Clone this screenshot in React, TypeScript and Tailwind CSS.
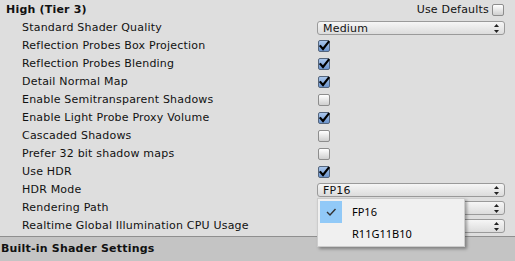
import React from "react";

const Arrows = () => (
  <svg width="5" height="9" viewBox="0 0 5 9" className="mr-[5px]">
    <path d="M2.5 0 L5 3 L0 3 Z" fill="#222" />
    <path d="M0 6 L5 6 L2.5 9 Z" fill="#222" />
  </svg>
);

const Check = ({ on }: { on: boolean }) =>
  on ? (
    <div className="w-[12px] h-[12px] rounded-[2px] border border-[#54657c] bg-gradient-to-b from-[#a9c6ec] to-[#6c94cc] relative">
      <svg width="12" height="12" viewBox="0 0 12 12" className="absolute left-[-1px] top-[-1px]">
        <path d="M2.5 6.2 L5 9 L10.5 2" stroke="#000" strokeWidth="2.2" fill="none" strokeLinecap="square" />
      </svg>
    </div>
  ) : (
    <div className="w-[12px] h-[12px] rounded-[2px] border border-[#8d8d8d] bg-gradient-to-b from-[#ffffff] to-[#cfcfcf]" />
  );

const Drop = ({ text }: { text: string }) => (
  <div className="w-[188px] h-[14px] rounded-[3px] border border-[#9a9a9a] bg-gradient-to-b from-[#f6f6f6] to-[#dcdcdc] flex items-center justify-between">
    <span className="pl-[5px] leading-none">{text}</span>
    <Arrows />
  </div>
);

type Row = { label: string; kind: "drop" | "check"; value?: string; on?: boolean };

const rows: Row[] = [
  { label: "Standard Shader Quality", kind: "drop", value: "Medium" },
  { label: "Reflection Probes Box Projection", kind: "check", on: true },
  { label: "Reflection Probes Blending", kind: "check", on: true },
  { label: "Detail Normal Map", kind: "check", on: true },
  { label: "Enable Semitransparent Shadows", kind: "check", on: false },
  { label: "Enable Light Probe Proxy Volume", kind: "check", on: true },
  { label: "Cascaded Shadows", kind: "check", on: false },
  { label: "Prefer 32 bit shadow maps", kind: "check", on: false },
  { label: "Use HDR", kind: "check", on: true },
  { label: "HDR Mode", kind: "drop", value: "FP16" },
  { label: "Rendering Path", kind: "drop", value: "" },
  { label: "Realtime Global Illumination CPU Usage", kind: "drop", value: "" },
];

export default function App() {
  return (
    <div
      className="w-[515px] h-[261px] bg-[#dedede] text-[11px] tracking-[0.2px] text-[#111] relative overflow-hidden flex flex-col"
      style={{ fontFamily: '"DejaVu Sans", Verdana, sans-serif' }}
    >
      <div className="flex flex-col pt-[1px] h-[237px] border-b border-[#8f8f8f]">
        <div className="h-[18px] flex items-center justify-between pl-[6px] pr-[11px]">
          <span className="font-bold">High (Tier 3)</span>
          <div className="flex items-center gap-[3px]">
            <span>Use Defaults</span>
            <Check on={false} />
          </div>
        </div>
        {rows.map((r) => (
          <div key={r.label} className="h-[18px] flex items-center">
            <div className="w-[317px] pl-[22px] whitespace-nowrap">{r.label}</div>
            {r.kind === "drop" ? (
              <Drop text={r.value || ""} />
            ) : (
              <div className="pl-[1px]">
                <Check on={!!r.on} />
              </div>
            )}
          </div>
        ))}
      </div>
      <div className="flex-1 bg-[#c4c4c4] flex items-center pl-[1px] font-bold">
        Built-in Shader Settings
      </div>

      <div
        className="absolute left-[317px] top-[198px] w-[148px] h-[49px] bg-[#f0f0f0] border border-[#cccccc] shadow-[2px_2px_3px_rgba(0,0,0,0.35)] flex flex-col pt-[2px] tracking-normal"
        style={{ fontFamily: '"Noto Sans", sans-serif' }}
      >
        <div className="h-[22px] flex items-center relative">
          <div className="absolute left-[2px] top-0 w-[22px] h-[22px] bg-[#91c9f7] flex items-center justify-center">
            <svg width="12" height="10" viewBox="0 0 12 10">
              <path d="M2 5 L5 8 L10.5 2" stroke="#333" strokeWidth="1.4" fill="none" />
            </svg>
          </div>
          <span className="pl-[34px] text-[11px] text-black">FP16</span>
        </div>
        <div className="h-[22px] flex items-center">
          <span className="pl-[34px] text-[11px] text-black">R11G11B10</span>
        </div>
      </div>
    </div>
  );
}
